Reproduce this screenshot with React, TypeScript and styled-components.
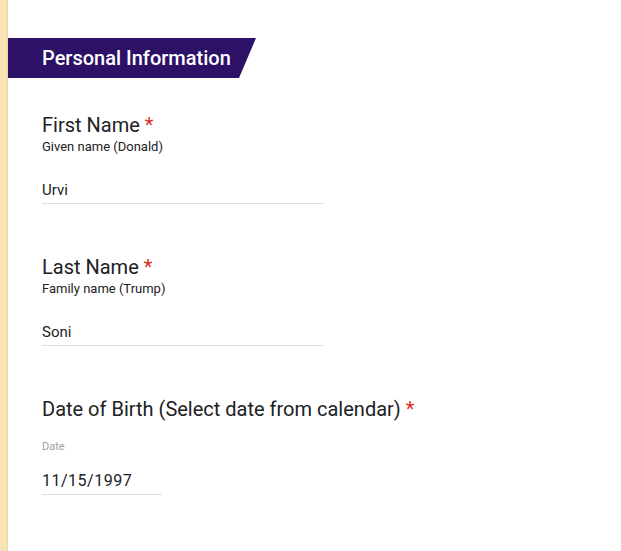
import React from "react";
import styled, { createGlobalStyle } from "styled-components";

const Global = createGlobalStyle`
  html, body { margin: 0; padding: 0; background: #ffffff; }
  body { font-family: Roboto, "Liberation Sans", Arial, sans-serif; }
`;

const Page = styled.div`
  display: flex;
  min-height: 551px;
  width: 621px;
`;

const Strip = styled.div`
  width: 8px;
  flex: none;
  background: #fae3b7;
  border-right: 1px solid #f0d6a6;
  box-sizing: border-box;
`;

const Content = styled.div`
  flex: 1;
  display: flex;
  flex-direction: column;
  padding-top: 38px;
`;

const Banner = styled.div`
  width: 248px;
  height: 40px;
  box-sizing: border-box;
  padding-left: 34px;
  display: flex;
  align-items: center;
  background: #2c1167;
  clip-path: polygon(0 0, 100% 0, calc(100% - 17px) 100%, 0 100%);
  color: #ffffff;
  font-size: 20px;
  font-weight: 500;
`;

const Fields = styled.div`
  display: flex;
  flex-direction: column;
  padding-left: 34px;
  padding-top: 35px;
  gap: 51px;
`;

const Field = styled.div`
  display: flex;
  flex-direction: column;
  align-items: flex-start;
`;

const Label = styled.div`
  font-size: 20px;
  line-height: 24px;
  color: #202124;
`;

const Star = styled.span`
  color: #d93025;
  margin-left: 5px;
`;

const Help = styled.div`
  margin-top: 1px;
  font-size: 13px;
  line-height: 17px;
  color: #202124;
`;

const SubLabel = styled.div`
  margin-top: 18px;
  font-size: 11px;
  line-height: 16px;
  color: #9e9e9e;
`;

const Value = styled.div<{ $width: number; $top: number; $spaced?: boolean }>`
  margin-top: ${(p) => p.$top}px;
  width: ${(p) => p.$width}px;
  font-size: ${(p) => (p.$spaced ? 16 : 15)}px;
  line-height: 20px;
  letter-spacing: ${(p) => (p.$spaced ? "0.5px" : "0")};
  color: #202124;
  padding-bottom: 3px;
  border-bottom: 1px solid #e0e0e0;
`;

export default function App() {
  return (
    <>
      <Global />
      <Page>
        <Strip />
        <Content>
          <Banner>Personal Information</Banner>
          <Fields>
            <Field>
              <Label>
                First Name<Star>*</Star>
              </Label>
              <Help>Given name (Donald)</Help>
              <Value $width={282} $top={25}>Urvi</Value>
            </Field>
            <Field>
              <Label>
                Last Name<Star>*</Star>
              </Label>
              <Help>Family name (Trump)</Help>
              <Value $width={282} $top={25}>Soni</Value>
            </Field>
            <Field>
              <Label>
                Date of Birth (Select date from calendar)<Star>*</Star>
              </Label>
              <SubLabel>Date</SubLabel>
              <Value $width={120} $top={16} $spaced>
                11/15/1997
              </Value>
            </Field>
          </Fields>
        </Content>
      </Page>
    </>
  );
}
